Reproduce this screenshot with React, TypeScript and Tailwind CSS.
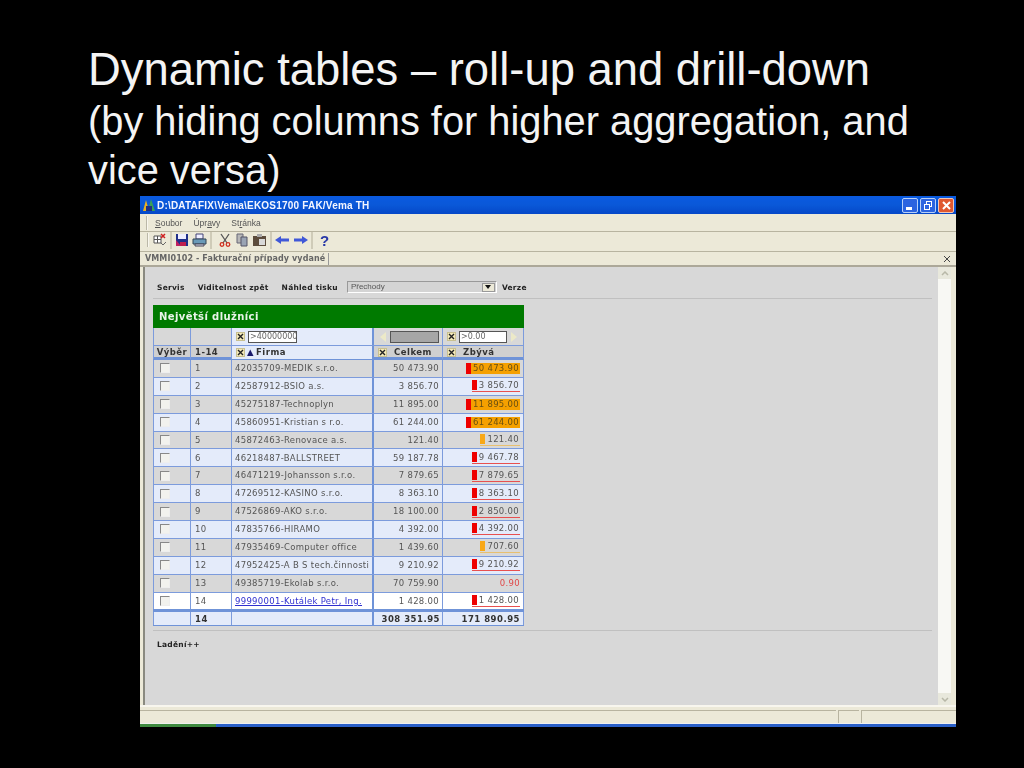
import React from "react";

const rows: [string, string, string, string, string][] = [
  ["1", "42035709-MEDIK s.r.o.", "50 473.90", "50 473.90", "ro"],
  ["2", "42587912-BSIO a.s.", "3 856.70", "3 856.70", "r"],
  ["3", "45275187-Technoplyn", "11 895.00", "11 895.00", "ro"],
  ["4", "45860951-Kristian s r.o.", "61 244.00", "61 244.00", "ro"],
  ["5", "45872463-Renovace a.s.", "121.40", "121.40", "o"],
  ["6", "46218487-BALLSTREET", "59 187.78", "9 467.78", "r"],
  ["7", "46471219-Johansson s.r.o.", "7 879.65", "7 879.65", "r"],
  ["8", "47269512-KASINO s.r.o.", "8 363.10", "8 363.10", "r"],
  ["9", "47526869-AKO s.r.o.", "18 100.00", "2 850.00", "r"],
  ["10", "47835766-HIRAMO", "4 392.00", "4 392.00", "r"],
  ["11", "47935469-Computer office", "1 439.60", "707.60", "o"],
  ["12", "47952425-A B S tech.činnosti", "9 210.92", "9 210.92", "r"],
  ["13", "49385719-Ekolab s.r.o.", "70 759.90", "0.90", "t"],
  ["14", "99990001-Kutálek Petr, Ing.", "1 428.00", "1 428.00", "r"],
];

const gridCols = "grid grid-cols-[38px_41px_142px_69px_81px]";

function XBox() {
  return (
    <span className="flex h-[9px] w-[9px] shrink-0 items-center justify-center bg-[#f4e9b8] border border-[#c8c090]">
      <svg width="7" height="7" viewBox="0 0 7 7">
        <path d="M1 1L6 6M6 1L1 6" stroke="#222" strokeWidth="1.4" />
      </svg>
    </span>
  );
}

function Remainder({ value, kind }: { value: string; kind: string }) {
  if (kind === "t") return <span className="text-[#e04848]">{value}</span>;
  if (kind === "ro")
    return (
      <span className="flex h-[11px] w-[54px] items-stretch bg-[#f5a000] text-[#6a5010]">
        <span className="w-[5px] bg-[#ee0000]" />
        <span className="flex-1 pr-[1px] text-right leading-[11px]">{value}</span>
      </span>
    );
  const bar = kind === "r" ? "bg-[#ee0000]" : "bg-[#f8a818]";
  const line = kind === "r" ? "border-[#e85050]" : "border-[#e8c070]";
  return (
    <span className={`flex h-[12px] items-stretch border-b ${line}`}>
      <span className={`mr-[2px] h-[10px] w-[5px] ${bar}`} />
      <span className="pr-[1px] leading-[11px]">{value}</span>
    </span>
  );
}

function Sep() {
  return <span className="mx-[3px] h-[17px] w-[2px] bg-[#cfcbb8]" />;
}

function ToolIcons() {
  return (
    <>
      <svg width="14" height="14" viewBox="0 0 14 14">
        <path d="M1 3h7v7H1zM1 6.5h7M4.500 3v7" fill="#fff" stroke="#555" />
        <path d="M8 1l4 4M12 1L8 5" stroke="#d02020" strokeWidth="1.500" />
        <path d="M8 10l2 2 3-3" fill="none" stroke="#666" />
      </svg>
      <Sep />
      <svg width="14" height="14" viewBox="0 0 14 14">
        <path d="M1 1h12v12H1z" fill="#20308a" />
        <path d="M3 1h8v5H3z" fill="#eef" />
        <path d="M1 7l5 6H1z" fill="#c02060" />
        <path d="M5 9h6v4H5z" fill="#c02050" />
      </svg>
      <svg width="15" height="14" viewBox="0 0 15 14" className="ml-[3px]">
        <path d="M4 1h7v5H4z" fill="#eef" stroke="#447" />
        <path d="M1 6h13v5H1z" fill="#6a9ab8" stroke="#345" />
        <path d="M3 11h9v2H3z" fill="#dde" stroke="#445" />
      </svg>
      <Sep />
      <svg width="14" height="14" viewBox="0 0 14 14" className="ml-[3px]">
        <path d="M3 1l6 9M11 1L5 10" stroke="#555" strokeWidth="1.300" />
        <circle cx="4" cy="11.500" r="1.800" fill="none" stroke="#d03020" strokeWidth="1.300" />
        <circle cx="10" cy="11.500" r="1.800" fill="none" stroke="#d03020" strokeWidth="1.300" />
      </svg>
      <svg width="14" height="14" viewBox="0 0 14 14" className="ml-[3px]">
        <path d="M2 1h6v9H2z" fill="#b8b8b8" stroke="#667" />
        <path d="M6 4h6v9H6z" fill="#9aa4b4" stroke="#556" />
      </svg>
      <svg width="15" height="14" viewBox="0 0 15 14" className="ml-[3px]">
        <path d="M1 3h13v10H1z" fill="#5c4c3c" />
        <path d="M5 1h5v3H5z" fill="#aaa" />
        <path d="M7 6h6v6H7z" fill="#d8d8d8" />
      </svg>
      <Sep />
      <svg width="14" height="10" viewBox="0 0 14 10">
        <path d="M0 5l6-4v2.500h8v3H6V9z" fill="#4058d8" />
      </svg>
      <svg width="14" height="10" viewBox="0 0 14 10" className="ml-[5px]">
        <path d="M14 5L8 1v2.500H0v3h8V9z" fill="#4058d8" />
      </svg>
      <Sep />
      <span className="ml-[4px] text-[15px] font-bold leading-none text-[#2838a8] [font-family:'Liberation_Sans',sans-serif]">?</span>
    </>
  );
}

export default function App() {
  return (
    <div className="h-[768px] w-[1024px] overflow-hidden bg-black [font-family:'Liberation_Sans',Arial,sans-serif]">
      <div className="pl-[88px] pt-[43px] text-[#f4f4f4]">
        <div className="text-[45.4px] leading-[54px]">Dynamic tables – roll-up and drill-down</div>
        <div className="w-[860px] text-[39.8px] leading-[49px]">(by hiding columns for higher aggregation, and vice versa)</div>
      </div>

      <div className="ml-[140px] mt-[1px] flex h-[531px] w-[816px] flex-col bg-[#ece9d8] blur-[0.35px] [font-family:'DejaVu_Sans',Verdana,sans-serif]">
        {/* title bar */}
        <div className="flex h-[18px] shrink-0 items-center bg-gradient-to-b from-[#0a5ae0] via-[#0a58d8] to-[#0648c8] pl-[2px] pr-[2px]">
          <svg width="14" height="14" viewBox="0 0 14 14">
            <path d="M1 13L4 2l3 11z" fill="#e8b020" />
            <path d="M6 13l3-12 4 12z" fill="#38a058" />
            <path d="M4 8h6v5H4z" fill="#203080" />
          </svg>
          <span className="ml-[1px] text-[10px] font-bold tracking-[0.2px] text-[#f4f6ff] [font-family:'Liberation_Sans',sans-serif]">D:\DATAFIX\Vema\EKOS1700 FAK/Vema TH</span>
          <span className="ml-auto flex gap-[2px]">
            <span className="flex h-[15px] w-[16px] items-end justify-start rounded-[2px] border border-[#b8d0f8] bg-[#2c64e0] pb-[2px] pl-[3px]">
              <span className="h-[3px] w-[6px] bg-white" />
            </span>
            <span className="relative h-[15px] w-[16px] rounded-[2px] border border-[#b8d0f8] bg-[#2c64e0]">
              <span className="absolute left-[5px] top-[2px] h-[6px] w-[6px] border border-white" />
              <span className="absolute left-[3px] top-[5px] h-[6px] w-[6px] border border-white bg-[#2c64e0]" />
            </span>
            <span className="flex h-[15px] w-[16px] items-center justify-center rounded-[2px] border border-[#f0c8b8] bg-[#e05830]">
              <svg width="9" height="9" viewBox="0 0 9 9">
                <path d="M1 1l7 7M8 1L1 8" stroke="#fff" strokeWidth="2" />
              </svg>
            </span>
          </span>
        </div>

        {/* menu */}
        <div className="flex h-[18px] shrink-0 items-center border-b border-[#b8b4a0] pl-[6px] pt-[1px] text-[8.500px] text-[#555] [font-family:'Liberation_Sans',sans-serif]">
          <span className="mr-[7px] h-[14px] w-[2px] border-l border-[#bbb8a8] bg-[#f8f6ee]" />
          <span className="mr-[11px]"><u>S</u>oubor</span>
          <span className="mr-[11px]">Úpr<u>a</u>vy</span>
          <span>St<u>r</u>ánka</span>
        </div>

        {/* toolbar */}
        <div className="flex h-[20px] shrink-0 items-center border-b border-[#b8b4a0] pb-[3px] pl-[7px]">
          <span className="mr-[4px] h-[14px] w-[2px] border-l border-[#bbb8a8] bg-[#f8f6ee]" />
          <ToolIcons />
        </div>

        {/* tab bar */}
        <div className="flex h-[15px] shrink-0 items-center justify-between border-b-2 border-[#aca899] pl-[5px] pr-[5px] text-[8px] font-bold text-[#666]">
          <span className="border-r border-[#999] pr-[3px] tracking-[0.1px]">VMMI0102 - Fakturační případy vydané</span>
          <svg width="8" height="8" viewBox="0 0 8 8">
            <path d="M1 1l6 6M7 1L1 7" stroke="#444" strokeWidth="1" />
          </svg>
        </div>

        {/* content */}
        <div className="flex min-h-0 flex-1 pl-[3px] pr-[5px]">
          <div className="min-w-0 flex-1 border-l-2 border-[#8a8a80] bg-[#d8d8d8] pl-[8px] pr-[6px]">
            <div className="flex h-[32px] items-end border-b border-[#c0c0c0] pb-[5px] text-[7.500px] font-bold tracking-[0.25px] text-[#222]">
              <span className="ml-[4px]">Servis</span>
              <span className="ml-[13px]">Viditelnost zpět</span>
              <span className="ml-[13px]">Náhled tisku</span>
              <span className="relative ml-[9px] flex h-[12px] w-[150px] items-center justify-between border border-[#999] border-b-white border-r-white bg-[#d4d4d4] pl-[3px] pr-[1px] text-[8px] font-normal tracking-normal text-[#555] [font-family:'Liberation_Sans',sans-serif]">
                Přechody
                <span className="flex h-[9px] w-[13px] items-center justify-center border border-[#999] bg-[#ece9d8]">
                  <svg width="6" height="4" viewBox="0 0 6 4"><path d="M0 0h6L3 4z" fill="#111" /></svg>
                </span>
              </span>
              <span className="ml-[5px]">Verze</span>
            </div>

            {/* table */}
            <div className="mt-[6px] w-[371px] text-[8.500px] tracking-[0.3px] text-[#555]">
              <div className="flex h-[23px] items-center bg-[#007a00] pl-[6px] text-[10px] font-bold tracking-[0.4px] text-[#e8f4e8]">Největší dlužníci</div>
              <div className={`${gridCols} h-[18px] border-b border-[#7c9bdc]`}>
                <div className="border-l border-r border-[#7c9bdc] bg-[#d8d8d8]" />
                <div className="border-r border-[#7c9bdc] bg-[#d8d8d8]" />
                <div className="flex items-center gap-[3px] border-r-2 border-[#6f93d8] bg-[#e4ebfa] pl-[4px]">
                  <XBox />
                  <span className="flex h-[12px] w-[49px] items-center overflow-hidden border border-[#555] bg-white pl-[1px] text-[8px] tracking-normal text-[#666]">&gt;40000000</span>
                </div>
                <div className="flex items-center border-r border-[#7c9bdc] bg-[#d8d8d8] pl-[6px]">
                  <svg width="7" height="10" viewBox="0 0 7 10"><path d="M6 0v10L0 5z" fill="#ece9c8" /></svg>
                  <span className="ml-[3px] h-[12px] w-[49px] border border-[#555] bg-[#a6a6a6]" />
                </div>
                <div className="flex items-center gap-[3px] border-r border-[#7c9bdc] bg-[#d8d8d8] pl-[4px]">
                  <XBox />
                  <span className="flex h-[12px] w-[48px] items-center border border-[#555] bg-white pl-[1px] text-[8px] tracking-normal text-[#666]">&gt;0.00</span>
                  <svg width="7" height="10" viewBox="0 0 7 10"><path d="M1 0v10l6-5z" fill="#ece9c8" /></svg>
                </div>
              </div>
              <div className={`${gridCols} h-[14px] border-b-[3px] border-[#6f93d8] bg-[#d0d0d0] font-bold tracking-[0.5px] text-[#333]`}>
                <div className="flex items-center justify-center border-l border-r border-[#7c9bdc]">Výběr</div>
                <div className="flex items-center border-r border-[#7c9bdc] pl-[4px]">1-14</div>
                <div className="flex items-center border-r-2 border-[#6f93d8] bg-[#e4ebfa] pl-[4px]">
                  <XBox />
                  <span className="ml-[2px] text-[#18186a]">▲</span>
                  <span className="ml-[2px]">Firma</span>
                </div>
                <div className="flex items-center border-r border-[#7c9bdc] pl-[4px]">
                  <XBox />
                  <span className="ml-[7px]">Celkem</span>
                </div>
                <div className="flex items-center border-r border-[#7c9bdc] pl-[4px]">
                  <XBox />
                  <span className="ml-[7px]">Zbývá</span>
                </div>
              </div>

              {rows.map(([n, firm, total, rest, kind], i) => {
                const last = i === rows.length - 1;
                const bg = last ? "bg-white" : i % 2 === 0 ? "bg-[#d8d8d8]" : "bg-[#e4ebfa]";
                return (
                  <div key={n} className={`${gridCols} h-[17.9px] border-b border-[#7c9bdc] ${bg}`}>
                    <div className="flex items-center border-l border-r border-[#7c9bdc] pl-[6px]">
                      <span className="h-[10px] w-[10px] border border-[#888] border-b-[#eee] border-r-[#eee] bg-[#f2f2ee]" />
                    </div>
                    <div className="flex items-center border-r border-[#7c9bdc] pl-[4px]">{n}</div>
                    <div className={`flex items-center overflow-hidden whitespace-nowrap border-r-2 border-[#6f93d8] pl-[3px] ${last ? "text-[#3030d0] underline" : ""}`}>{firm}</div>
                    <div className="flex items-center justify-end border-r border-[#7c9bdc] pr-[3px]">{total}</div>
                    <div className="flex items-center justify-end border-r border-[#7c9bdc] pr-[3px]">
                      <Remainder value={rest} kind={kind} />
                    </div>
                  </div>
                );
              })}

              <div className={`${gridCols} mt-[-1px] h-[17px] border-b border-t-[3px] border-[#6f93d8] bg-[#e4ebfa] font-bold tracking-[0.5px] text-[#333]`}>
                <div className="border-l border-r border-[#7c9bdc]" />
                <div className="flex items-center border-r border-[#7c9bdc] pl-[4px]">14</div>
                <div className="border-r-2 border-[#6f93d8]" />
                <div className="flex items-center justify-end border-r border-[#7c9bdc] pr-[2px]">308 351.95</div>
                <div className="flex items-center justify-end border-r border-[#7c9bdc] pr-[3px]">171 890.95</div>
              </div>
            </div>

            <div className="mt-[4px] border-t border-[#c0c0c0] pl-[4px] pt-[8px] text-[7.500px] font-bold tracking-[0.25px] text-[#222]">Ladění++</div>
          </div>

          {/* scrollbar */}
          <div className="flex w-[13px] shrink-0 flex-col justify-between bg-[#f8f8f4]">
            <span className="flex h-[12px] items-center justify-center bg-[#e8e8dc]">
              <svg width="8" height="5" viewBox="0 0 8 5"><path d="M1 4l3-3 3 3" fill="none" stroke="#b8b8a8" strokeWidth="1.500" /></svg>
            </span>
            <span className="flex h-[12px] items-center justify-center bg-[#e8e8dc]">
              <svg width="8" height="5" viewBox="0 0 8 5"><path d="M1 1l3 3 3-3" fill="none" stroke="#b8b8a8" strokeWidth="1.500" /></svg>
            </span>
          </div>
        </div>

        {/* status bar */}
        <div className="flex h-[18px] shrink-0 border-t-2 border-[#f8f6ee] pt-[3px]">
          <div className="flex-1 border-t border-[#b8b4a0]" />
          <div className="ml-[2px] w-[21px] border-l border-t border-[#b8b4a0]" />
          <div className="ml-[2px] w-[95px] border-l border-t border-[#b8b4a0]" />
        </div>

        {/* bottom edge */}
        <div className="flex h-[4px] shrink-0 border-t border-[#f0f0f0]">
          <div className="w-[76px] bg-[#3f8a3f]" />
          <div className="flex-1 bg-[#2a60c8]" />
        </div>
      </div>
    </div>
  );
}
